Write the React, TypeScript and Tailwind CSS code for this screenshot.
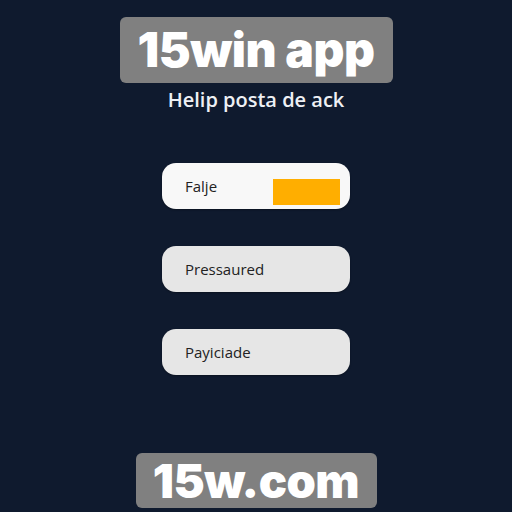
import React from 'react';

const fields = [
  { label: 'Falje', bg: 'bg-[#f8f8f8]', accent: true },
  { label: 'Pressaured', bg: 'bg-[#e6e6e6]', accent: false },
  { label: 'Payiciade', bg: 'bg-[#e6e6e6]', accent: false },
];

const App = () => {
  return (
    <div className="h-[512px] w-[512px] overflow-hidden bg-[#0f1a2e] flex flex-col items-center font-['Open_Sans',sans-serif]">
      <div className="mt-[17px] w-[273px] h-[66px] rounded-[6px] bg-[#808080] flex items-center justify-center">
        <span className="text-white text-[48px] leading-none font-black tracking-[-0.5px] font-['Inter',sans-serif]">
          15win app
        </span>
      </div>
      <p className="mt-[5px] text-[#eef0f4] text-[20px] leading-[24px] font-semibold">Helip posta de ack</p>

      <div className="mt-[51px] flex flex-col gap-[37px]">
        {fields.map((f) => (
          <div
            key={f.label}
            className={`w-[188px] h-[46px] rounded-[14px] ${f.bg} flex items-center justify-between pl-[23px] pr-[10px] shadow-[0_1px_2px_rgba(0,0,0,0.3)]`}
          >
            <span className="text-[#222] text-[15px] font-medium">{f.label}</span>
            {f.accent && <div className="w-[67px] h-[26px] mt-[12px] bg-[#ffae00]" />}
          </div>
        ))}
      </div>

      <div className="mt-auto mb-[4px] w-[241px] h-[55px] rounded-[6px] bg-[#808080] flex items-center justify-center">
        <span className="text-white text-[47px] leading-none font-black tracking-[-0.5px] font-['Inter',sans-serif]">
          15w.com
        </span>
      </div>
    </div>
  );
};

export default App;
